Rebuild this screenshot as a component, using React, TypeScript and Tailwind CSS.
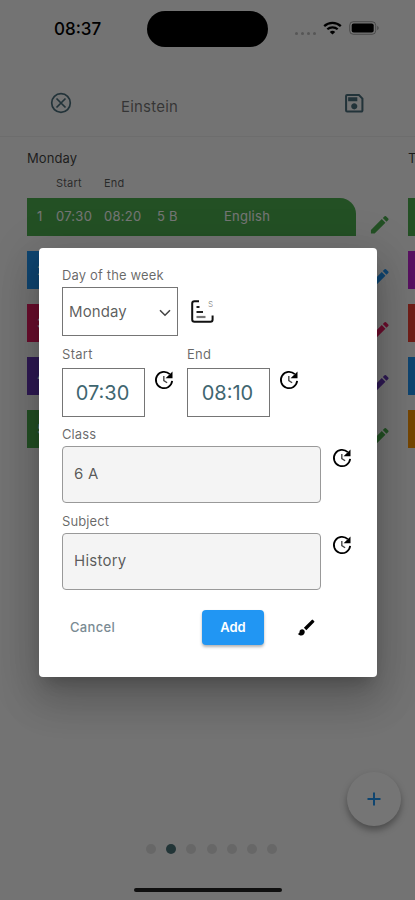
import { MdBrush, MdEdit, MdOutlineSave } from "react-icons/md";

const rows = [
  { color: "bg-[#4caf50]", icon: "text-[#4caf50]", next: "bg-[#4caf50]", start: "07:30", end: "08:20", room: "5 B", subject: "English" },
  { color: "bg-[#2196f3]", icon: "text-[#2196f3]", next: "bg-[#c026d3]" },
  { color: "bg-[#e91e63]", icon: "text-[#e91e63]", next: "bg-[#f44336]" },
  { color: "bg-[#673ab7]", icon: "text-[#673ab7]", next: "bg-[#2196f3]" },
  { color: "bg-[#4caf50]", icon: "text-[#4caf50]", next: "bg-[#ff9800]" },
];

function HistoryIcon({ className }: { className: string }) {
  return (
    <svg className={`size-[22px] text-black ${className}`} viewBox="0 0 24 24" fill="none">
      <path d="M18.3 5.7A8.9 8.9 0 1 0 20.9 13" stroke="currentColor" strokeWidth="1.9" />
      <path d="M21.3 2.6v7.6h-7.6z" fill="currentColor" />
      <path d="M11.8 7.6v5l3.6 2.4" stroke="#444" strokeWidth="1.5" />
    </svg>
  );
}

function StatusBar() {
  return (
    <div className="flex h-[58px] items-start">
      <div className="w-[147px] pl-[54px] pt-[18px] text-[17px] font-medium leading-[22px] text-black">08:37</div>
      <div className="mt-[11px] h-9 w-[121px] rounded-full bg-black" />
      <div className="ml-[27px] mt-[32px] flex gap-[3px]">
        {[0, 1, 2, 3].map((i) => (
          <span key={i} className="size-[3px] rounded-full bg-black/25" />
        ))}
      </div>
      <svg className="ml-[7px] mt-[21px]" width="19" height="14" viewBox="0 0 19 14" fill="none">
        <path d="M1.2 5.1C5.8.7 13.2.7 17.8 5.1" stroke="#000" strokeWidth="2.3" />
        <path d="M4.3 8.3c2.9-2.7 7.5-2.7 10.4 0" stroke="#000" strokeWidth="2.2" />
        <path d="M9.5 13.5 6.8 10.9c1.5-1.4 3.9-1.4 5.4 0z" fill="#000" />
      </svg>
      <svg className="ml-[7px] mt-[21px]" width="31" height="14" viewBox="0 0 31 14">
        <rect x=".7" y=".7" width="26" height="12.6" rx="3.6" fill="none" stroke="#000" strokeOpacity=".35" />
        <rect x="2.7" y="2.6" width="22" height="8.8" rx="2" fill="#000" />
        <path d="M28.3 4.8c1.8.7 1.8 3.7 0 4.4z" fill="#000" fillOpacity=".4" />
      </svg>
    </div>
  );
}

function Header() {
  return (
    <div className="flex h-[79px] items-start border-b border-black/5 pl-[49px]">
      <svg className="mt-[33px] size-6 text-[#4b6f7d]" viewBox="0 0 24 24" fill="none" stroke="currentColor">
        <circle cx="12" cy="12" r="9.3" strokeWidth="1.7" />
        <path d="m7.5 7.5 9 9m0-9-9 9" strokeWidth="1.7" />
      </svg>
      <span className="ml-12 mt-[37px] w-[221px] text-[15px] leading-6 tracking-[0.2px] text-black/55">Einstein</span>
      <MdOutlineSave className="mt-[33px] size-[24.5px] text-[#4b6f7d]" />
    </div>
  );
}

function Timetable() {
  return (
    <div className="h-[700px] pt-[11px]">
      <div className="flex pl-[27px] text-[13px] leading-5 tracking-[0.1px] text-black/75">
        <span className="w-[381px] shrink-0">Monday</span>
        <span>T</span>
      </div>
      <div className="flex pl-14 pt-[7px] text-[11px] leading-4 tracking-[0.2px] text-black/65">
        <span className="w-12">Start</span>
        <span>End</span>
      </div>
      <div className="mt-[6.5px] flex flex-col gap-[15px]">
        {rows.map((row, i) => (
          <div key={i} className="flex h-[38.2px] pl-[27px]">
            <div className={`flex w-[328.5px] items-center rounded-tr-2xl pl-[10px] pt-px text-[13px] tracking-[0.25px] text-white ${row.color}`}>
              <span className="w-[19px]">{i + 1}</span>
              <span className="w-12">{row.start}</span>
              <span className="w-[53px]">{row.end}</span>
              <span className="w-[67px]">{row.room}</span>
              <span>{row.subject}</span>
            </div>
            <MdEdit className={`ml-[12px] mt-[15px] size-[23.5px] shrink-0 ${row.icon}`} />
            <div className={`ml-[17px] grow ${row.next}`} />
          </div>
        ))}
      </div>
    </div>
  );
}

function Footer() {
  return (
    <div className="flex flex-col items-center">
      <div className="ml-2 mt-[7px] flex gap-[10.3px]">
        {[0, 1, 2, 3, 4, 5, 6].map((i) => (
          <span key={i} className={`size-[10px] rounded-full ${i === 1 ? "bg-[#4b7379]" : "bg-[#e0e0e0]"}`} />
        ))}
      </div>
      <div className="mt-[33.5px] h-[4.5px] w-[148px] rounded-full bg-[#212121]" />
    </div>
  );
}

function TimeField({ label, value }: { label: string; value: string }) {
  return (
    <div className="flex w-[125px]">
      <div>
        <div className="text-[13px] leading-5 tracking-[0.3px] text-black/60">{label}</div>
        <div className="mt-1 flex h-[49px] w-[83px] items-center justify-center border border-[#757575] pr-[2px] text-xl text-[#3f6670]">
          {value}
        </div>
      </div>
      <HistoryIcon className="ml-2 mt-[25px]" />
    </div>
  );
}

function TextField({ label, value }: { label: string; value: string }) {
  return (
    <div className="flex h-[87px]">
      <div>
        <div className="text-[13px] leading-5 tracking-[0.1px] text-black/60">{label}</div>
        <div className="mt-[2px] flex h-[57px] w-[259px] items-center rounded-[4px] border border-[#999] bg-[#f4f4f4] pl-[11px] text-[15px] tracking-[0.25px] text-black/65">
          {value}
        </div>
      </div>
      <HistoryIcon className="ml-[10px] mt-[23px]" />
    </div>
  );
}

function LessonDialog() {
  return (
    <div className="h-[429px] w-[338px] rounded-[4px] bg-white pl-[23px] pt-[17px] shadow-[0_11px_15px_-7px_rgba(0,0,0,0.2),0_24px_38px_3px_rgba(0,0,0,0.14),0_9px_46px_8px_rgba(0,0,0,0.12)]">
      <div className="text-[13px] leading-5 tracking-[0.15px] text-black/60">Day of the week</div>
      <div className="mt-[2px] flex">
        <div className="flex h-[49px] w-[116px] items-center justify-between border border-[#757575] pl-[6px] pr-[6px] pt-[2px] text-[15px] tracking-[0.1px] text-black/65">
          Monday
          <svg width="12" height="8" viewBox="0 0 12 8" fill="none">
            <path d="m1 1.3 5 4.9 5-4.9" stroke="#444" strokeWidth="1.6" />
          </svg>
        </div>
        <div className="relative ml-[13px] mt-[13px] size-6">
          <svg width="24" height="24" viewBox="0 0 24 24" fill="none">
            <path d="M8 1.2H3.5Q1.2 1.2 1.2 3.5V19.5Q1.2 21.8 3.5 21.8H19.5Q21.6 21.8 21.6 19.5V15.5" stroke="#111" strokeWidth="2" />
            <path d="M5.5 7h3M5.5 12h6.5" stroke="#222" strokeWidth="2" />
            <path d="M5.5 17h9" stroke="#777" strokeWidth="2.2" />
          </svg>
          <span className="absolute left-[17px] -top-[2px] text-[8px] leading-3 text-black/45">S</span>
        </div>
      </div>
      <div className="mt-2 flex">
        <TimeField label="Start" value="07:30" />
        <TimeField label="End" value="08:10" />
      </div>
      <div className="mt-[7px]">
        <TextField label="Class" value="6 A" />
        <TextField label="Subject" value="History" />
      </div>
      <div className="mt-3 flex h-[35px] items-center">
        <span className="w-[140px] pl-2 text-[13px] font-medium tracking-[0.3px] text-[#7a8b93]">Cancel</span>
        <button className="h-[35px] w-[62px] rounded-[4px] bg-[#2196f3] text-[13px] font-semibold text-white shadow-[0_2px_3px_rgba(0,0,0,0.3)]">
          Add
        </button>
        <MdBrush className="ml-8 size-[21px] text-black" />
      </div>
    </div>
  );
}

export default function App() {
  return (
    <div className="relative h-[900px] w-[415px] overflow-hidden bg-[#fafafa] font-['Inter','Liberation_Sans',sans-serif]">
      <StatusBar />
      <Header />
      <Timetable />
      <Footer />
      <button className="absolute left-[346.5px] top-[772px] flex size-[54px] items-center justify-center rounded-full bg-white shadow-[0_4px_7px_rgba(0,0,0,0.35)]">
        <svg width="14" height="14" viewBox="0 0 14 14">
          <path d="M7 .5v13M.5 7h13" stroke="#2196f3" strokeWidth="2" />
        </svg>
      </button>
      <div className="absolute inset-0 bg-black/54 pl-[39px] pt-[248px]">
        <LessonDialog />
      </div>
    </div>
  );
}
